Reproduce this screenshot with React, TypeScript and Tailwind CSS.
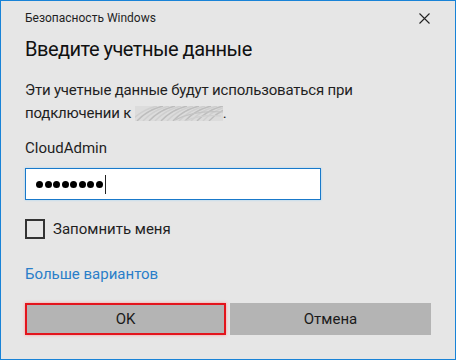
import React from 'react';

const font = { fontFamily: 'Roboto, "Noto Sans", sans-serif' };

const Scribble = () => (
  <svg width="88" height="15" viewBox="0 0 88 15" className="inline-block align-middle">
    <rect x="0" y="0" width="88" height="15" fill="#dcdcdc" />
    {Array.from({ length: 14 }).map((_, i) => (
      <path
        key={i}
        d={`M${i * 6 - 4} 15 Q${i * 6 + 6} 4 ${i * 6 + 22} 0`}
        stroke={i % 2 ? '#bdbdbd' : '#cfcfcf'}
        strokeWidth="1.4"
        fill="none"
      />
    ))}
    <path d="M40 14 Q60 4 88 6" stroke="#c4c4c4" strokeWidth="1.2" fill="none" />
    <path d="M50 15 Q66 8 86 10" stroke="#d0d0d0" strokeWidth="1.2" fill="none" />
  </svg>
);

export default function App() {
  return (
    <div
      className="w-[456px] h-[360px] bg-[#e6e6e6] border border-[#1883d7] px-6 text-[#1a1a1a] overflow-hidden"
      style={font}
    >
      {/* Заголовок окна */}
      <div className="flex items-center justify-between h-[32px] mt-[1px]">
        <span className="text-[12px] leading-none text-[#1f1f1f]">Безопасность Windows</span>
        <svg width="11" height="11" viewBox="0 0 11 11" className="mr-[1px]">
          <path d="M0.5 0.5 L10.5 10.5 M10.5 0.5 L0.5 10.5" stroke="#222" strokeWidth="1.1" />
        </svg>
      </div>

      <div className="text-[20px] leading-[28px] mt-[1px] tracking-[-0.025em] text-[#111]">
        Введите учетные данные
      </div>

      <div className="text-[15px] leading-[23px] mt-[16px] tracking-[-0.013em] text-[#1f1f1f]">
        <div>Эти учетные данные будут использоваться при</div>
        <div className="flex items-center">
          <span>подключении к&nbsp;</span>
          <Scribble />
          <span>.</span>
        </div>
      </div>

      <div className="text-[15px] leading-[23px] mt-[12px] text-[#1f1f1f]">CloudAdmin</div>

      <div className="mt-[8px] w-[296px] h-[32px] bg-white border border-[#1979ca] shadow-[0_0_2px_#9fd2f5] flex items-center pl-[10px]">
        <div className="flex items-center gap-[1.5px]">
          {Array.from({ length: 8 }).map((_, i) => (
            <div key={i} className="w-[7px] h-[7px] rounded-full bg-black" />
          ))}
        </div>
        <div className="w-px h-[19px] bg-[#222] ml-[2px]" />
      </div>

      <div className="flex items-center gap-[8px] mt-[19px]">
        <div className="w-[20px] h-[20px] border-2 border-[#333]" />
        <span className="text-[15px] leading-[20px] text-[#1f1f1f]">Запомнить меня</span>
      </div>

      <div className="text-[15px] leading-[23px] mt-[24px] text-[#2a7ec9]">Больше вариантов</div>

      <div className="flex gap-[4px] mt-[17px]">
        <button className="w-[201px] h-[32px] bg-[#b4b4b4] border-2 border-[#e3141c] shadow-[0_0_3px_#ff9a9a] text-[15px] text-[#1a1a1a]">
          OK
        </button>
        <button className="w-[201px] h-[32px] bg-[#b4b4b4] text-[15px] text-[#1a1a1a]">Отмена</button>
      </div>
    </div>
  );
}
